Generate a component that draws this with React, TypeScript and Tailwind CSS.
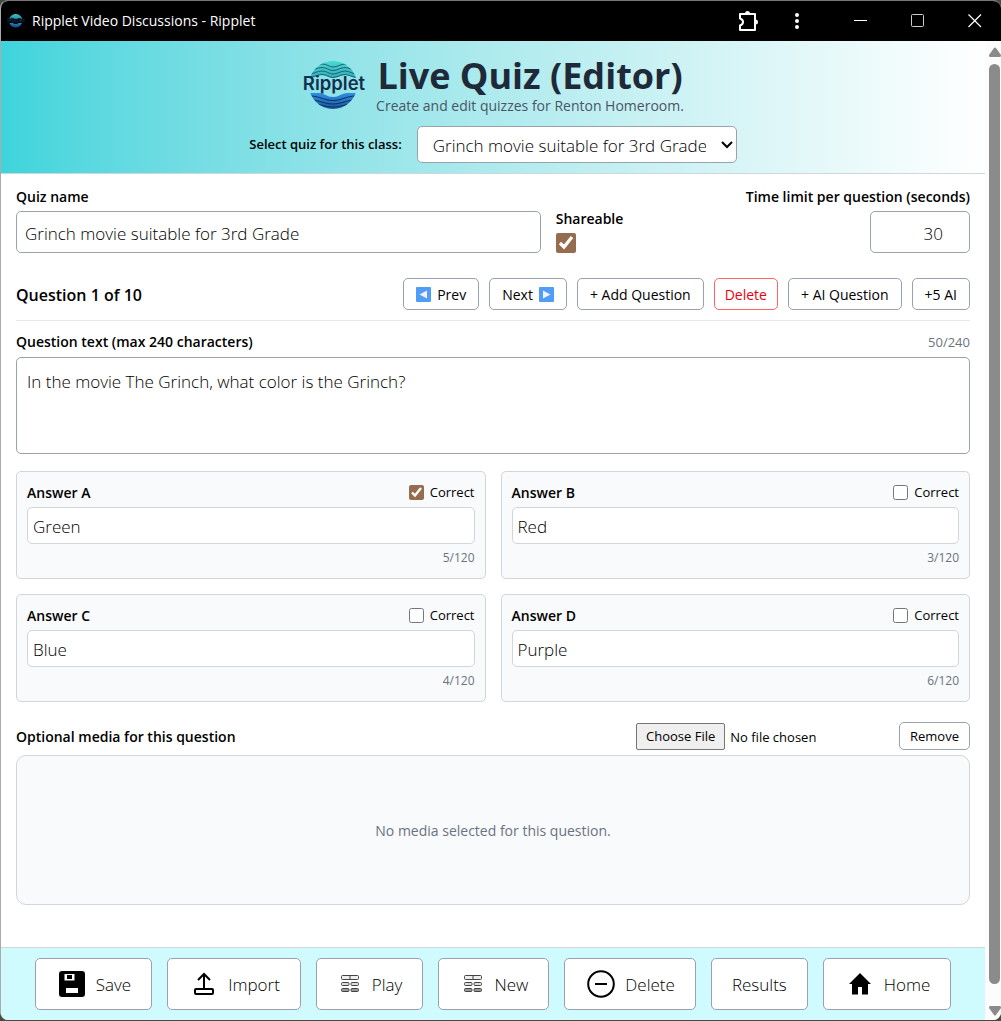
import { useState, type ReactNode } from "react";

const QUIZ_NAME = "Grinch movie suitable for 3rd Grade";

function RippletLogo({ className }: { className: string }) {
  return (
    <svg viewBox="0 0 64 50" className={className} aria-hidden="true">
      <defs>
        <linearGradient id="logo-top" x1="0" y1="0" x2="0" y2="1">
          <stop offset="0" stopColor="#48dbd3" />
          <stop offset="1" stopColor="#35a9b8" />
        </linearGradient>
        <linearGradient id="logo-bottom" x1="0" y1="0" x2="0" y2="1">
          <stop offset="0" stopColor="#2f8fe0" />
          <stop offset="1" stopColor="#17508f" />
        </linearGradient>
        <clipPath id="logo-circle">
          <circle cx="31" cy="24" r="24" />
        </clipPath>
      </defs>
      <g clipPath="url(#logo-circle)">
        <path d="M6 0H56V17C50 17 47 14 43 14S35 17 31 17 24 14 20 14 12 17 6 17Z" fill="url(#logo-top)" />
        <g fill="none" stroke="#1c6577" strokeWidth="1">
          <path d="M6 6C12 6 15 3 20 3S27 6 31 6 39 3 43 3 50 6 56 6" />
          <path d="M6 9.500C12 9.500 15 6.500 20 6.500S27 9.500 31 9.500 39 6.500 43 6.500 50 9.500 56 9.500" />
          <path d="M6 13C12 13 15 10 20 10S27 13 31 13 39 10 43 10 50 13 56 13" />
          <path d="M6 16.500C12 16.500 15 13.500 20 13.500S27 16.500 31 16.500 39 13.500 43 13.500 50 16.500 56 16.500" />
        </g>
        <path d="M6 32H17C22 32 25 36 31 36S40 32 45 32H56V50H6Z" fill="url(#logo-bottom)" />
        <g fill="none" stroke="#0c2f63" strokeWidth="1">
          <path d="M8 35C18 35 22 39.500 31 39.500S44 35 54 35" />
          <path d="M8 39C18 39 22 43 31 43S44 39 54 39" />
          <path d="M10 43C19 43 23 46 31 46S43 43 52 43" />
        </g>
      </g>
      <text x="32" y="29" textAnchor="middle" fontFamily="Inter, sans-serif" fontWeight="600" fontSize="18.500" fill="#12304f">
        Ripplet
      </text>
    </svg>
  );
}

function ArrowTile({ flip = false }: { flip?: boolean }) {
  return (
    <svg viewBox="0 0 15 15" className={flip ? "size-[15px] rotate-180" : "size-[15px]"} aria-hidden="true">
      <rect width="15" height="15" rx="1" fill="#4f9df5" />
      <path d="M4 3.500V11.500L11.500 7.500Z" fill="#f4f0ff" />
    </svg>
  );
}

function SaveIcon() {
  return (
    <svg viewBox="0 0 26 26" className="size-[26px]" aria-hidden="true">
      <rect width="26" height="26" rx="3" fill="#000" />
      <path d="M5.500 3H15.500V9.500H5.500Z" fill="#fff" />
      <path d="M8 4H13V8H8Z" fill="#000" />
      <path d="M7 17H19V22H7Z" fill="#fff" />
    </svg>
  );
}

function ImportIcon() {
  return (
    <svg viewBox="0 0 22 24" className="h-6 w-[22px]" fill="none" stroke="#000" strokeWidth="2" aria-hidden="true">
      <path d="M11 17V2M5 8L11 2L17 8" />
      <rect x="2" y="17" width="18" height="5" rx="1" />
    </svg>
  );
}

function CardsIcon() {
  return (
    <svg viewBox="0 0 20 18" className="h-[18px] w-5" stroke="#444" aria-hidden="true">
      <rect x="1.500" y=".5" width="17" height="4" rx="1" fill="#eee" />
      <path d="M10 .5V4.500" />
      <g fill="#ddd">
        <rect x="1.500" y="7.500" width="7.500" height="3" rx="1" />
        <rect x="11" y="7.500" width="7.500" height="3" rx="1" />
      </g>
      <g fill="#999">
        <rect x="1.500" y="13.500" width="7.500" height="3" rx="1" />
        <rect x="11" y="13.500" width="7.500" height="3" rx="1" />
      </g>
    </svg>
  );
}

function MinusCircleIcon() {
  return (
    <svg viewBox="0 0 28 28" className="size-7" fill="none" stroke="#000" strokeWidth="2" aria-hidden="true">
      <circle cx="14" cy="14" r="12.800" />
      <path d="M8 14H20" />
    </svg>
  );
}

function HomeIcon() {
  return (
    <svg viewBox="0 0 22 22" className="size-[22px]" aria-hidden="true">
      <path d="M11 0L22 11H19V21.500H13V14H9V21.500H3V11H0Z" fill="#000" />
    </svg>
  );
}

function TitleBar() {
  return (
    <div className="flex h-10 items-center bg-black pl-[6px] text-white">
      <RippletLogo className="h-4 w-[18px]" />
      <span className="ml-[7px] text-[14px] leading-5">Ripplet Video Discussions - Ripplet</span>
      <div className="ml-auto flex items-center">
        <button type="button" aria-label="Extensions" className="mr-[33px]">
          <svg viewBox="0 0 22 22" className="size-[22px]" fill="none" stroke="#fff" strokeWidth="2">
            <path
              d="M3 4H18V20H3V15.500C4.500 15 6 14 6 12S4.500 9 3 8.500Z"
              strokeLinejoin="round"
            />
            <path d="M8 3.500a2.500 2.500 0 0 1 5 0ZM18.500 9.500a2.500 2.500 0 0 1 0 5Z" fill="#fff" stroke="none" />
          </svg>
        </button>
        <button type="button" aria-label="More" className="mr-[52px]">
          <svg viewBox="0 0 10 20" className="h-5 w-[10px]" fill="#fff">
            <circle cx="5" cy="4" r="2" />
            <circle cx="5" cy="10" r="2" />
            <circle cx="5" cy="16" r="2" />
          </svg>
        </button>
        <button type="button" aria-label="Minimize" className="mr-[43px]">
          <svg viewBox="0 0 14 14" className="size-[14px]" stroke="#fff">
            <path d="M0 6.500H13" />
          </svg>
        </button>
        <button type="button" aria-label="Maximize" className="mr-[43px]">
          <svg viewBox="0 0 14 14" className="size-[14px]" fill="none" stroke="#ccc">
            <rect x=".5" y=".5" width="12" height="12" rx="1" />
          </svg>
        </button>
        <button type="button" aria-label="Close" className="mr-[19px]">
          <svg viewBox="0 0 14 14" className="size-[14px]" stroke="#fff" strokeWidth="1.200">
            <path d="M.5 .5L13 13M13 .5L.5 13" />
          </svg>
        </button>
      </div>
    </div>
  );
}

function SmallButton({ danger = false, children }: { danger?: boolean; children: ReactNode }) {
  return (
    <button
      type="button"
      className={
        danger
          ? "flex h-8 items-center rounded-[5px] border border-red-400 bg-white px-[10px] text-[14px] text-red-600"
          : "flex h-8 items-center gap-[6px] rounded-[5px] border border-gray-400 bg-white px-3 text-[14px]"
      }
    >
      {children}
    </button>
  );
}

function AnswerCard({ letter, text, correct = false }: { letter: string; text: string; correct?: boolean }) {
  const [value, setValue] = useState(text);
  const id = `answer-${letter}`;

  return (
    <div className="rounded-[5px] border border-gray-300 bg-gray-50 p-[10px]">
      <div className="flex h-5 items-center justify-between">
        <label htmlFor={id} className="text-[14px] font-semibold">
          Answer {letter}
        </label>
        <label className="flex items-center gap-[6px] text-[13px]">
          <input type="checkbox" defaultChecked={correct} className="size-[15px] accent-[#966c4f]" />
          <span className="pt-[2px]">Correct</span>
        </label>
      </div>
      <input
        id={id}
        value={value}
        maxLength={120}
        onChange={(e) => setValue(e.target.value)}
        className="mt-[5px] block h-[37px] w-full rounded-[5px] border border-gray-300 bg-white px-[5px] pt-[2px] text-[17px] font-light"
      />
      <div className="mt-1 text-right text-[12px] leading-5 text-gray-500">{value.length}/120</div>
    </div>
  );
}

function FooterButton({ icon, small = false, children }: { icon?: ReactNode; small?: boolean; children: ReactNode }) {
  return (
    <button
      type="button"
      className="flex h-[52px] items-center gap-2 rounded-[5px] border border-gray-400 bg-white px-5 text-[17px] font-light"
    >
      {icon && <span className={small ? "flex w-[27px] justify-center" : "flex w-8 justify-center"}>{icon}</span>}
      <span className="pt-[2px]">{children}</span>
    </button>
  );
}

export default function App() {
  const [question, setQuestion] = useState("In the movie The Grinch, what color is the Grinch?");

  return (
    <div className="min-h-screen bg-[#4a4a40] font-['Open_Sans','Noto_Sans',sans-serif] text-black">
      <div className="flex min-h-[calc(100vh-1px)] flex-col overflow-hidden rounded-lg border-t border-l border-t-[#777] border-l-[#aaa] bg-white">
        <TitleBar />

        <div className="flex flex-1">
          <div className="flex min-w-0 flex-1 flex-col">
            <header className="flex flex-col items-center border-b border-gray-300 bg-linear-to-r from-[#3dd4dc] to-white pt-[15px] pb-[10px]">
              <div className="flex items-center gap-[10px]">
                <RippletLogo className="h-[50px] w-16" />
                <div className="flex flex-col items-center">
                  <h1 className="text-[36px] leading-10 font-bold text-gray-800">Live Quiz (Editor)</h1>
                  <p className="text-[14px] leading-5 text-gray-600">Create and edit quizzes for Renton Homeroom.</p>
                </div>
              </div>
              <div className="mt-[10px] flex items-center gap-[15px]">
                <label htmlFor="quiz-select" className="text-[13px] font-semibold">
                  Select quiz for this class:
                </label>
                <div className="relative w-[320px]">
                  <select
                    id="quiz-select"
                    className="block h-[37px] w-full appearance-none rounded-[5px] border border-gray-400 bg-white pt-[2px] pr-[30px] pl-[15px] text-[17px] font-light"
                  >
                    <option>{QUIZ_NAME}</option>
                  </select>
                  <svg
                    viewBox="0 0 12 8"
                    className="pointer-events-none absolute top-[15px] right-1 h-2 w-3"
                    fill="none"
                    stroke="#000"
                    strokeWidth="2"
                    aria-hidden="true"
                  >
                    <path d="M1 1L6 6L11 1" />
                  </svg>
                </div>
              </div>
            </header>

            <main className="px-[15px] pt-[13px]">
              <div className="flex items-end gap-[15px]">
                <div className="w-[55%]">
                  <label htmlFor="quiz-name" className="block text-[14px] leading-5 font-semibold">
                    Quiz name
                  </label>
                  <input
                    id="quiz-name"
                    defaultValue={QUIZ_NAME}
                    className="mt-1 block h-[42px] w-full rounded-[5px] border border-gray-400 px-2 pt-[2px] text-[17px] font-light"
                  />
                </div>
                <div>
                  <label htmlFor="shareable" className="block text-[14px] leading-5 font-semibold">
                    Shareable
                  </label>
                  <input id="shareable" type="checkbox" defaultChecked className="mt-1 block size-5 accent-[#966c4f]" />
                </div>
                <div className="ml-auto flex flex-col items-end">
                  <label htmlFor="time-limit" className="text-[14px] leading-5 font-semibold">
                    Time limit per question (seconds)
                  </label>
                  <input
                    id="time-limit"
                    inputMode="numeric"
                    defaultValue="30"
                    className="mt-1 h-[42px] w-[100px] rounded-[5px] border border-gray-400 pt-[2px] pr-[26px] text-right text-[17px] font-light"
                  />
                </div>
              </div>

              <div className="mt-[25px] flex items-center justify-between border-b border-gray-200 pb-[10px]">
                <h2 className="pt-[2px] text-[16px] font-semibold">Question 1 of 10</h2>
                <div className="flex gap-[10px]">
                  <SmallButton>
                    <ArrowTile flip />
                    Prev
                  </SmallButton>
                  <SmallButton>
                    Next
                    <ArrowTile />
                  </SmallButton>
                  <SmallButton>+ Add Question</SmallButton>
                  <SmallButton danger>Delete</SmallButton>
                  <SmallButton>+ AI Question</SmallButton>
                  <SmallButton>+5 AI</SmallButton>
                </div>
              </div>

              <div className="mt-[11px] flex items-center justify-between leading-5">
                <label htmlFor="question-text" className="text-[14px] font-semibold">
                  Question text (max 240 characters)
                </label>
                <span className="text-[13px] text-gray-500">{question.length}/240</span>
              </div>
              <textarea
                id="question-text"
                value={question}
                maxLength={240}
                onChange={(e) => setQuestion(e.target.value)}
                className="mt-[5px] block h-[97px] w-full resize-none rounded-[5px] border border-gray-400 px-[10px] py-3 text-[17px] leading-6 font-light"
              />

              <div className="mt-[17px] grid grid-cols-2 gap-[15px]">
                <AnswerCard letter="A" text="Green" correct />
                <AnswerCard letter="B" text="Red" />
                <AnswerCard letter="C" text="Blue" />
                <AnswerCard letter="D" text="Purple" />
              </div>

              <div className="mt-5 flex items-center">
                <label htmlFor="media-file" className="text-[14px] font-semibold">
                  Optional media for this question
                </label>
                <input
                  id="media-file"
                  type="file"
                  className="ml-auto w-[255px] text-[13px] file:mr-[5px] file:h-[27px] file:rounded-xs file:border file:border-[#767676] file:bg-[#efefef] file:px-[9px] file:pt-[2px]"
                />
                <button
                  type="button"
                  className="ml-2 flex h-7 items-center rounded-[5px] border border-gray-400 bg-white px-[10px] pt-[2px] text-[13px]"
                >
                  Remove
                </button>
              </div>
              <div className="mt-[5px] flex h-[150px] items-center justify-center rounded-[10px] border border-gray-300 bg-gray-50 text-[14px] text-gray-500">
                No media selected for this question.
              </div>
            </main>

            <footer className="mt-auto flex justify-center gap-[15px] border-t border-gray-300 bg-[#cffafe] py-[10px]">
              <FooterButton icon={<SaveIcon />}>Save</FooterButton>
              <FooterButton icon={<ImportIcon />}>Import</FooterButton>
              <FooterButton icon={<CardsIcon />} small>
                Play
              </FooterButton>
              <FooterButton icon={<CardsIcon />} small>
                New
              </FooterButton>
              <FooterButton icon={<MinusCircleIcon />}>Delete</FooterButton>
              <FooterButton>Results</FooterButton>
              <FooterButton icon={<HomeIcon />}>Home</FooterButton>
            </footer>
          </div>

          {/* Scrollbar */}
          <div className="flex w-4 flex-col items-center bg-[#fcfcfc] pt-[6px] pb-1 pl-[3px]">
            <svg viewBox="0 0 12 10" className="h-[10px] w-3" fill="#8b8b8b" aria-hidden="true">
              <path d="M5 1Q6 0 7 1L12 8Q12 10 11 10H1Q0 10 0 8Z" />
            </svg>
            <div className="mt-[7px] mb-[22px] w-[11px] flex-1 rounded-full bg-[#8b8b8b]" />
            <svg viewBox="0 0 12 10" className="h-[10px] w-3 rotate-180" fill="#8b8b8b" aria-hidden="true">
              <path d="M5 1Q6 0 7 1L12 8Q12 10 11 10H1Q0 10 0 8Z" />
            </svg>
          </div>
        </div>
      </div>
    </div>
  );
}
